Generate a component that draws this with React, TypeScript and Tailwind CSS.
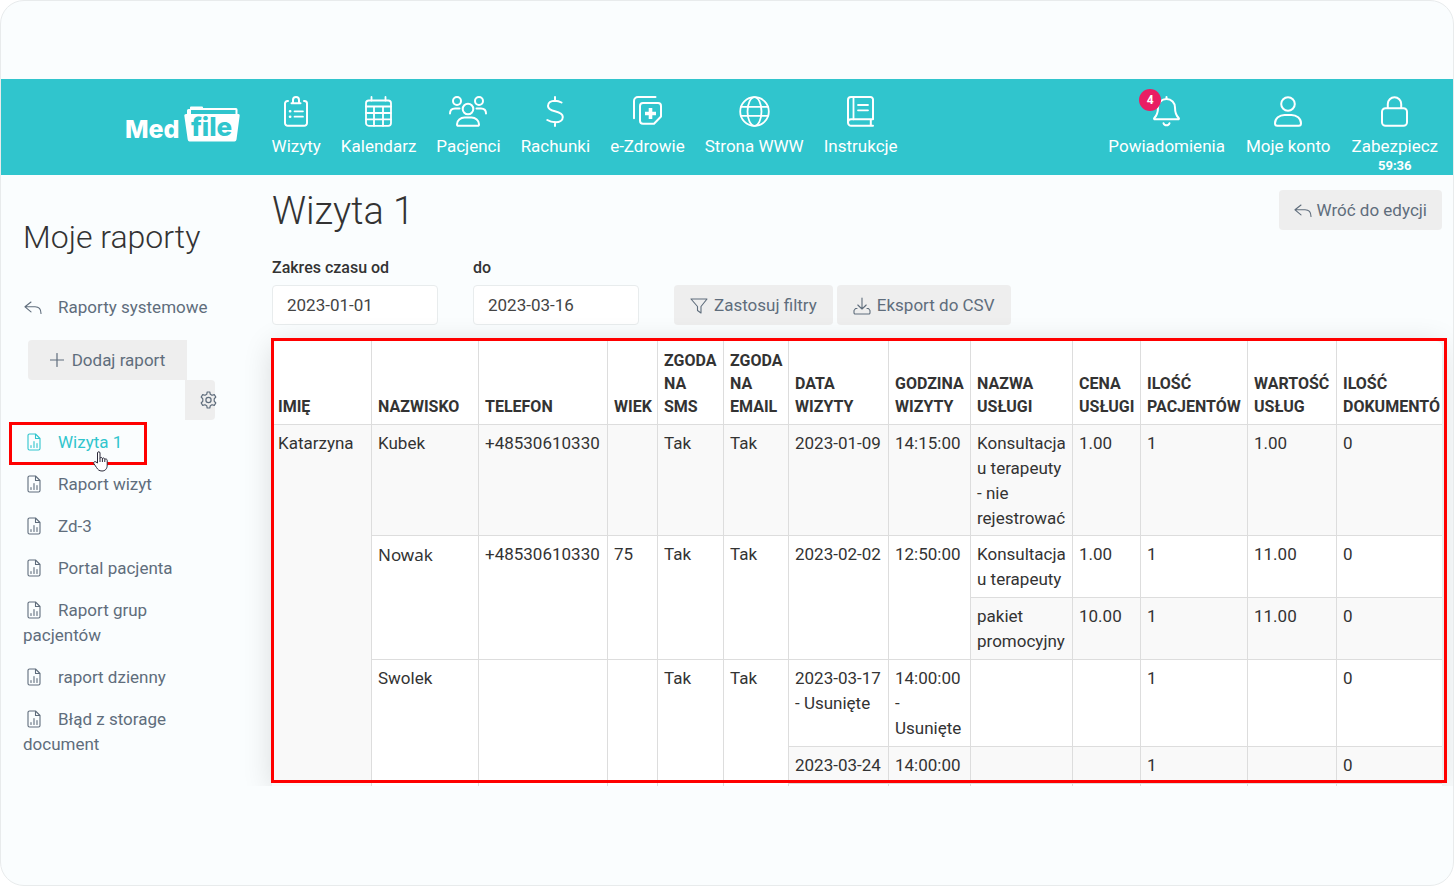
import React from "react";

type IconProps = { className?: string };

function Svg({ w, h, sw = 2, children, className = "" }: { w: number; h: number; sw?: number; children: React.ReactNode; className?: string }) {
  return (
    <svg width={w} height={h} viewBox={`0 0 ${w} ${h}`} fill="none" stroke="currentColor" strokeWidth={sw} strokeLinecap="round" strokeLinejoin="round" className={className} aria-hidden="true">
      {children}
    </svg>
  );
}

const ClipboardIcon = () => (
  <Svg w={24} h={31}>
    <path d="M4 5H3.5A2.5 2.5 0 0 0 1 7.500V27A2.800 2.800 0 0 0 3.800 29.800H20.200A2.800 2.800 0 0 0 23 27V7.500A2.500 2.500 0 0 0 20.500 5H20" />
    <path d="M7.500 7.200H16.500M9 6.500V4A3 3 0 0 1 15 4V6.500" />
    <path d="M10.500 15.300H19M10.500 20.700H19" strokeWidth={1.700} />
    <path d="M6 15.300h.2M6 20.700h.2" strokeWidth={2.600} />
  </Svg>
);

const CalendarIcon = () => (
  <Svg w={27} h={31} sw={1.8}>
    <rect x={1} y={4.500} width={25} height={25.300} rx={2.800} />
    <path d="M6.500 1V4.500M20.500 1V4.500M1 10.500H26M1 17H26M1 23.300H26M9 10.500V29.800M18 10.500V29.800" />
  </Svg>
);

const PatientsIcon = () => (
  <Svg w={38} h={31}>
    <circle cx={19} cy={13} r={5.300} />
    <circle cx={8} cy={5} r={4} />
    <circle cx={30} cy={5} r={4} />
    <path d="M8 28.200C8 24.500 11.500 21.500 15.500 21.500H22.500C26.500 21.500 30 24.500 30 28.200C30 29.300 29.500 29.800 28.500 29.800H9.500C8.500 29.800 8 29.300 8 28.200Z" />
    <path d="M1 17.500C1 14.500 3 12.500 6 12.500H10.500M37 17.500C37 14.500 35 12.500 32 12.500H27.500" />
  </Svg>
);

const DollarIcon = () => (
  <Svg w={18} h={31}>
    <path d="M9 1V5M9 26V30M15.500 6.500C13.500 5.300 11.500 4.700 9 4.700C4.800 4.700 2 6.800 2 9.900C2 13.300 5 14.300 9 15.200C13.500 16.200 16.800 17.500 16.800 21C16.800 24.500 13.500 26.300 9.500 26.300C6.300 26.300 3.500 25.500 1.300 24" />
  </Svg>
);

const HealthIcon = () => (
  <Svg w={29} h={31}>
    <path d="M1 22.300V5A4 4 0 0 1 5 1H22.500" />
    <path d="M10 7H25A3 3 0 0 1 28 10V20.500L21 27.800H10A3 3 0 0 1 7 24.800V10A3 3 0 0 1 10 7Z" />
    <path d="M17.500 12V23M12 17.500H23" strokeWidth={3.600} strokeLinecap="butt" />
  </Svg>
);

const GlobeIcon = () => (
  <Svg w={31} h={31} sw={1.8}>
    <circle cx={15.500} cy={15.500} r={14.300} />
    <ellipse cx={15.500} cy={15.500} rx={7} ry={14.300} />
    <path d="M2 10.800H29M2 19.800H29" />
  </Svg>
);

const BookIcon = () => (
  <Svg w={27} h={31}>
    <path d="M26 23.300V3.500A2.500 2.500 0 0 0 23.500 1H4A3 3 0 0 0 1 4V26.500A3.200 3.200 0 0 0 4.200 29.800H26M26 23.300H4A3 3 0 0 0 1 26.300M23.800 23.500V29.500" />
    <path d="M6.500 1V23.300M11 9H21M11 14.300H21" strokeWidth={1.800} />
  </Svg>
);

const BellIcon = () => (
  <Svg w={27} h={31}>
    <path d="M13.500 1V3M13.500 3C8.500 3 5 6.800 5 11.500C5 17 4 19.500 1.300 22C.8 22.700 1.200 23.300 2 23.300H25C25.800 23.300 26.200 22.700 25.700 22C23 19.500 22 17 22 11.500C22 6.800 18.500 3 13.500 3Z" />
    <path d="M10.500 27.200C11 28.800 12 29.300 13.500 29.300S16 28.800 16.500 27.200" />
  </Svg>
);

const UserIcon = () => (
  <Svg w={28} h={31}>
    <circle cx={14} cy={8} r={6.800} />
    <path d="M1 27.300C1 22.500 5.500 19 10.500 19H17.500C22.500 19 27 22.500 27 27.300C27 29 26.300 29.800 24.700 29.800H3.300C1.700 29.800 1 29 1 27.300Z" />
  </Svg>
);

const LockIcon = () => (
  <Svg w={27} h={31}>
    <rect x={1} y={12.300} width={25} height={17.500} rx={3.500} />
    <path d="M6.800 12V8A6.700 6.700 0 0 1 20.200 8V12" />
  </Svg>
);

const ReplyIcon = ({ className }: IconProps) => (
  <Svg w={18} h={14} sw={1.1} className={className}>
    <path d="M7 1L1 5.800L7 10.800M1 5.800H11C15 5.800 17 8.500 17 12.500" />
  </Svg>
);

const PlusIcon = () => (
  <Svg w={14} h={14} sw={1.2}>
    <path d="M7 .500V13.500M.500 7H13.500" />
  </Svg>
);

const GearIcon = () => (
  <Svg w={17} h={18} sw={1.2} className="shrink-0">
    <circle cx={8.500} cy={9} r={2.600} />
    <path d="M7.200 1H9.800L10.300 3.300L12 4.300L14.300 3.600L15.800 6L14.200 7.800V10.200L15.800 12L14.300 14.400L12 13.700L10.300 14.700L9.800 17H7.200L6.700 14.700L5 13.700L2.700 14.400L1.200 12L2.800 10.200V7.800L1.200 6L2.700 3.600L5 4.300L6.700 3.300Z" />
  </Svg>
);

const ReportIcon = () => (
  <Svg w={14} h={18} sw={1.1} className="mr-[17px] ml-1 inline-block align-[-3px]">
    <path d="M8.500 1H2.500A1.500 1.500 0 0 0 1 2.500V15.500A1.500 1.500 0 0 0 2.500 17H11.500A1.500 1.500 0 0 0 13 15.500V5.500L8.500 1V5.500H13" />
    <path d="M4 14.500V12.500M7 14.500V8.500M10 14.500V10.500" />
  </Svg>
);

const FilterIcon = () => (
  <Svg w={18} h={16} sw={1.1}>
    <path d="M1 1H17L11 8.500V15L7.500 12.500V8.500Z" />
  </Svg>
);

const DownloadIcon = () => (
  <Svg w={18} h={18} sw={1.1}>
    <path d="M9 1V12M4.800 8L9 12L13.200 8M4 11.500H2.500L1 13.500V15.500A1.300 1.300 0 0 0 2.300 17H15.700A1.300 1.300 0 0 0 17 15.500V13.500L15.500 11.500H14" />
  </Svg>
);

const HandCursor = () => (
  <svg width={15} height={21} viewBox="0 0 15 21" className="absolute top-[21px] left-[70px]" fill="white" stroke="#2b2b3b" strokeWidth={1} strokeLinejoin="round" aria-hidden="true">
    <path d="M4.500 12V2C4.500 .3 7 .3 7 2V7.500C7 6 9.400 6 9.400 7.800C9.600 6.500 11.800 6.700 11.800 8.500C12.200 7.500 14.200 7.800 14.200 9.500V14C14.200 18 12 20 9 20C6 20 4.800 18.500 3.500 16.500L.800 12.500C.2 11 2 10 3 11Z" />
    <path d="M7 7.500V11M9.400 8V11M11.800 8.500V11" />
  </svg>
);

const mainNav = [
  { label: "Wizyty", icon: <ClipboardIcon /> },
  { label: "Kalendarz", icon: <CalendarIcon /> },
  { label: "Pacjenci", icon: <PatientsIcon /> },
  { label: "Rachunki", icon: <DollarIcon /> },
  { label: "e-Zdrowie", icon: <HealthIcon /> },
  { label: "Strona WWW", icon: <GlobeIcon /> },
  { label: "Instrukcje", icon: <BookIcon /> },
];

const accountNav = [
  { label: "Powiadomienia", icon: <BellIcon />, badge: "4" },
  { label: "Moje konto", icon: <UserIcon /> },
  { label: "Zabezpiecz", icon: <LockIcon />, timer: "59:36" },
];

function NavItem({ label, icon, badge, timer }: { label: string; icon: React.ReactNode; badge?: string; timer?: string }) {
  return (
    <a href="#" className="flex flex-col items-center whitespace-nowrap text-white">
      <span className="relative">
        {icon}
        {badge && (
          <span className="absolute -top-[7px] -left-3.5 flex size-[22px] items-center justify-center rounded-full bg-[#e91e63] text-xs font-bold">{badge}</span>
        )}
      </span>
      <span className="mt-[7px] text-[17px] leading-6">{label}</span>
      {timer && <span className="text-[13px] leading-4 font-bold">{timer}</span>}
    </a>
  );
}

function Logo() {
  return (
    <a href="#" className="mt-2.5 mr-3 flex h-9 items-end gap-1 font-['Inter'] font-extrabold text-white">
      <span className="pb-px text-[25px] leading-6">Med</span>
      <span className="relative flex h-9 w-14 items-end justify-center">
        <svg width={56} height={36} viewBox="0 0 56 36" className="absolute inset-0" aria-hidden="true">
          <path d="M3 9V4.500Q3 3 4.500 3H6V1.500Q6 .500 7 .500H18Q19 .500 19 1.500V2H52Q53.500 2 53.500 3.500V9H51.500V4H7V9Z" fill="white" />
          <path d="M2 8H54.500Q56 8 55.700 9.500L52.500 33.500Q52.200 35.500 50.500 35.500H5.500Q4 35.500 3.700 33.500L.300 9.500Q.200 8 2 8Z" fill="white" />
        </svg>
        <span className="relative pb-[3px] text-[26px] leading-6 text-[#30c5cd]">file</span>
      </span>
    </a>
  );
}

const reports = ["Wizyta 1", "Raport wizyt", "Zd-3", "Portal pacjenta", "Raport grup pacjentów", "raport dzienny", "Błąd z storage document"];

function Sidebar() {
  return (
    <aside className="w-[271px] shrink-0 pt-11 pl-[22px] text-[17px] leading-[25px] text-[#5f6d7c]">
      <h2 className="text-[32px] leading-9 font-light text-[#333]">Moje raporty</h2>
      <a href="#" className="mt-10 flex items-center">
        <ReplyIcon className="mr-4 ml-px" />
        Raporty systemowe
      </a>
      <div className="mt-5 ml-[5px] w-[187px]">
        <button type="button" className="flex h-10 w-[159px] items-center justify-center gap-2 rounded-l-sm bg-[#eee]">
          <PlusIcon />
          Dodaj raport
        </button>
        <button type="button" aria-label="Ustawienia" className="ml-auto flex h-10 w-[30px] items-center rounded-r-sm bg-[#eee] pl-[15px]">
          <GearIcon />
        </button>
      </div>
      <ul className="mt-2.5 w-[195px] space-y-[17px]">
        {reports.map((name, i) => (
          <li key={name} className="relative">
            <a href="#" className={i === 0 ? "text-[#30c5cd]" : ""}>
              <ReportIcon />
              {name}
            </a>
            {i === 0 && (
              <>
                <span className="pointer-events-none absolute -top-2 -left-3.5 h-[43px] w-[138px] border-3 border-[#f00]" />
                <HandCursor />
              </>
            )}
          </li>
        ))}
      </ul>
    </aside>
  );
}

const columns = [
  { label: "Imię", width: "w-[100px]" },
  { label: "Nazwisko", width: "w-[107px]" },
  { label: "Telefon", width: "w-[129px]" },
  { label: "Wiek", width: "w-[50px]" },
  { label: "Zgoda na SMS", width: "w-[66px]" },
  { label: "Zgoda na email", width: "w-[65px]" },
  { label: "Data wizyty", width: "w-[100px]" },
  { label: "Godzina wizyty", width: "w-[82px]" },
  { label: "Nazwa usługi", width: "w-[102px]" },
  { label: "Cena usługi", width: "w-[68px]" },
  { label: "Ilość pacjentów", width: "w-[107px]" },
  { label: "Wartość usług", width: "w-[89px]" },
  { label: "Ilość dokumentó", width: "w-auto" },
];

type Cell = { text: string; rows?: number };

const rows: { height: string; cells: Cell[] }[] = [
  {
    height: "h-[111px]",
    cells: [
      { text: "Katarzyna", rows: 6 }, { text: "Kubek" }, { text: "+48530610330" }, { text: "" }, { text: "Tak" }, { text: "Tak" },
      { text: "2023-01-09" }, { text: "14:15:00" }, { text: "Konsultacja u terapeuty - nie rejestrować" }, { text: "1.00" }, { text: "1" }, { text: "1.00" }, { text: "0" },
    ],
  },
  {
    height: "h-[62px]",
    cells: [
      { text: "Nowak", rows: 2 }, { text: "+48530610330", rows: 2 }, { text: "75", rows: 2 }, { text: "Tak", rows: 2 }, { text: "Tak", rows: 2 },
      { text: "2023-02-02", rows: 2 }, { text: "12:50:00", rows: 2 }, { text: "Konsultacja u terapeuty" }, { text: "1.00" }, { text: "1" }, { text: "11.00" }, { text: "0" },
    ],
  },
  { height: "h-[62px]", cells: [{ text: "pakiet promocyjny" }, { text: "10.00" }, { text: "1" }, { text: "11.00" }, { text: "0" }] },
  {
    height: "h-[87px]",
    cells: [
      { text: "Swolek", rows: 3 }, { text: "", rows: 3 }, { text: "", rows: 3 }, { text: "Tak", rows: 3 }, { text: "Tak", rows: 3 },
      { text: "2023-03-17 - Usunięte" }, { text: "14:00:00 - Usunięte" }, { text: "" }, { text: "" }, { text: "1" }, { text: "" }, { text: "0" },
    ],
  },
  { height: "h-[37px]", cells: [{ text: "2023-03-24" }, { text: "14:00:00" }, { text: "" }, { text: "" }, { text: "1" }, { text: "" }, { text: "0" }] },
  { height: "h-[37px]", cells: [{ text: "" }, { text: "" }, { text: "" }, { text: "" }, { text: "" }, { text: "" }, { text: "" }] },
];

function ReportTable() {
  return (
    <div className="relative mt-4 min-h-0 flex-1">
      <div className="h-full rounded-t-md bg-white shadow-[0_4px_30px_rgba(0,0,0,0.14)]">
        <div className="h-full overflow-hidden rounded-t-md">
          <table className="w-full min-w-[1170px] table-fixed border-separate border-spacing-0 text-[17px] text-[#333]">
            <thead>
              <tr className="h-[84px]">
                {columns.map((c) => (
                  <th key={c.label} scope="col" className={`${c.width} border-r border-b border-[#ddd] pt-1.5 pr-0 pb-1.5 pl-1.5 text-left align-bottom text-base leading-[23px] font-bold uppercase last:border-r-0`}>
                    {c.label}
                  </th>
                ))}
              </tr>
            </thead>
            <tbody>
              {rows.map((row, r) => (
                <tr key={r} className={row.height}>
                  {row.cells.map((cell, c) => (
                    <td key={c} rowSpan={cell.rows ?? 1} className={`${r % 2 === 0 ? "bg-[#f9f9f9]" : "bg-white"} ${cell.text === "Nowak" ? "font-['Noto_Sans']" : ""} border-r border-b border-[#ddd] pt-1.5 pr-1 pb-1 pl-1.5 align-top leading-[25px] last:border-r-0`}>
                      {cell.text}
                    </td>
                  ))}
                </tr>
              ))}
            </tbody>
          </table>
        </div>
      </div>
      <div className="pointer-events-none absolute -top-[3px] -right-[5px] bottom-[3px] -left-px border-3 border-[#f00]" />
    </div>
  );
}

const buttonClass = "flex h-10 items-center rounded-sm bg-[#eee] pt-px text-[17px] text-[#5f6d7c]";

function DateField({ id, label, value }: { id: string; label: string; value: string }) {
  return (
    <div className="mr-[35px] w-[166px]">
      <label htmlFor={id} className="block text-base leading-6 font-medium text-[#333]">{label}</label>
      <input id={id} type="text" defaultValue={value} className="mt-[5px] h-10 w-full rounded-sm border border-[#e8eced] bg-white px-3.5 text-[17px] text-[#444]" />
    </div>
  );
}

export default function App() {
  return (
    <div className="h-screen bg-white font-['Roboto',sans-serif]">
      <div className="flex h-full flex-col rounded-3xl border border-[#e8ebec] bg-[#fafdfe] pt-[78px] pb-[99px]">
        <header className="flex h-24 shrink-0 items-start justify-between bg-[#30c5cd] pt-[17px] pr-[15px] pl-[124px]">
          <nav className="flex gap-5">
            <Logo />
            {mainNav.map((item) => (
              <NavItem key={item.label} {...item} />
            ))}
          </nav>
          <nav className="flex gap-[21px]">
            {accountNav.map((item) => (
              <NavItem key={item.label} {...item} />
            ))}
          </nav>
        </header>
        <div className="flex min-h-0 flex-1 overflow-hidden">
          <Sidebar />
          <main className="flex min-w-0 flex-1 flex-col pr-[11px]">
            <div className="flex items-start justify-between pt-[15px]">
              <h1 className="text-[38px] leading-[42px] font-light text-[#333]">Wizyta 1</h1>
              <button type="button" className={`${buttonClass} gap-[5px] px-[15px]`}>
                <ReplyIcon />
                Wróć do edycji
              </button>
            </div>
            <form className="mt-6 flex items-end">
              <DateField id="from" label="Zakres czasu od" value="2023-01-01" />
              <DateField id="to" label="do" value="2023-03-16" />
              <button type="button" className={`${buttonClass} mr-1 gap-1.5 px-4`}>
                <FilterIcon />
                Zastosuj filtry
              </button>
              <button type="button" className={`${buttonClass} gap-1.5 px-4`}>
                <DownloadIcon />
                Eksport do CSV
              </button>
            </form>
            <ReportTable />
          </main>
        </div>
      </div>
    </div>
  );
}
